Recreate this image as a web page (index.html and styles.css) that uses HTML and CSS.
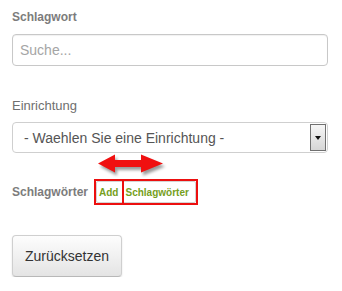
FILE: index.html
```html
<!DOCTYPE html>
<html lang="de">
<head>
  <meta charset="UTF-8">
  <meta name="viewport" content="width=device-width, initial-scale=1.0">
  <title>Suche</title>
  <link rel="stylesheet" href="styles.css">
</head>
<body>

<div class="search-form">
  <!-- Keyword -->
  <label class="field-label" for="keyword">Schlagwort</label>
  <input type="text" id="keyword" class="text-input" placeholder="Suche...">

  <!-- Facility -->
  <label class="field-label light">Einrichtung</label>
  <div class="select-box">
    <span class="select-value">- Waehlen Sie eine Einrichtung -</span>
    <span class="select-arrow"><span class="caret"></span></span>
  </div>

  <!-- Keywords -->
  <div class="tag-row">
    <span class="field-label inline">Schlagwörter</span>
    <div class="annot">
      <svg class="move-arrow" width="72" height="28" viewBox="0 0 72 28">
        <path d="M2 12.5 L19 3.5 L19 9 L45 9 L45 3.5 L67 12.5 L45 21.5 L45 16 L19 16 L19 21.5 Z" fill="#f01010"/>
      </svg>
      <button class="add-btn"><span>Add</span><span class="add-word">Schlagwörter</span></button>
      <span class="mark mark-add"></span>
      <span class="mark mark-word"></span>
    </div>
  </div>

  <button class="reset-btn">Zurücksetzen</button>
</div>

</body>
</html>
```

FILE: styles.css
```css
/* Search form */
body {
  margin: 0;
  font-family: "Liberation Sans", Arial, sans-serif;
  background: #fff;
}
.search-form {
  padding: 10px 14px 0 12px;
}
.field-label {
  display: block;
  font-size: 12px;
  font-weight: bold;
  line-height: 14px;
  color: #7c7c7c;
}
.field-label.light {
  font-size: 13px;
  font-weight: normal;
  line-height: 15px;
  margin-top: 32px;
  color: #6f6f6f;
}
.field-label.inline {
  display: inline-block;
}
.text-input {
  display: block;
  box-sizing: border-box;
  width: 100%;
  height: 32px;
  margin: 10px 0 0;
  padding: 0 7px;
  border: 1px solid #c8c8c8;
  border-radius: 4px;
  box-shadow: inset 0 1px 1px rgba(0, 0, 0, 0.06);
  font-family: inherit;
  font-size: 14px;
  color: #555;
}
.text-input::placeholder {
  color: #a5a5a5;
}
.select-box {
  display: flex;
  align-items: center;
  box-sizing: border-box;
  height: 31px;
  margin-top: 9px;
  padding: 1px 1px 1px 11px;
  border: 1px solid #cfcfcf;
  border-radius: 4px;
  font-size: 14px;
  color: #555;
}
.select-value {
  flex: 1;
}
.select-arrow {
  display: flex;
  align-items: center;
  justify-content: center;
  box-sizing: border-box;
  width: 16px;
  height: 27px;
  border: 1px solid #707070;
  background: linear-gradient(#f6f6f6, #d6d6d6);
}
.caret {
  width: 0;
  height: 0;
  border-left: 3px solid transparent;
  border-right: 3px solid transparent;
  border-top: 4px solid #111;
}
.tag-row {
  display: flex;
  align-items: center;
  gap: 6px;
  margin-top: 26px;
}
.annot {
  position: relative;
  padding: 2px;
}
.add-btn {
  display: flex;
  align-items: center;
  box-sizing: border-box;
  width: 100px;
  height: 22px;
  padding: 0 0 0 2px;
  border: 1px solid #d4d4d4;
  border-radius: 2px;
  background: #fff;
  font-family: inherit;
  font-size: 10px;
  font-weight: bold;
  color: #76a01c;
}
.add-word {
  margin-left: 7px;
}
.mark {
  position: absolute;
  top: 0;
  height: 26px;
  box-sizing: border-box;
  border: 2px solid #ec0f0f;
}
.mark-add {
  left: 0;
  width: 30px;
}
.mark-word {
  left: 28px;
  width: 76px;
}
.move-arrow {
  position: absolute;
  left: 2px;
  top: -28px;
  filter: drop-shadow(2px 3px 1.5px rgba(0, 0, 0, 0.4));
}
.reset-btn {
  display: block;
  box-sizing: border-box;
  width: 110px;
  height: 42px;
  margin-top: 30px;
  border: 1px solid #cfcfcf;
  border-bottom-color: #b8b8b8;
  border-radius: 4px;
  background: linear-gradient(#fdfdfd, #e4e4e4);
  box-shadow: 0 1px 2px rgba(0, 0, 0, 0.12);
  font-family: inherit;
  font-size: 14px;
  color: #333;
}
```
